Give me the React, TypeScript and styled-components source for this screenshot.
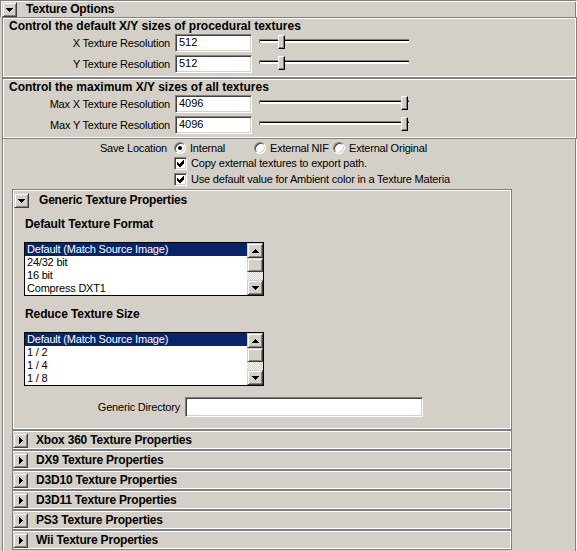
import React from "react";
import styled, { createGlobalStyle, css } from "styled-components";

const Global = createGlobalStyle`
  html, body { margin: 0; padding: 0; background: #d4d0c8; }
  body { font-family: "Liberation Sans", Arial, sans-serif; font-size: 11px; color: #000; }
`;

const sunken = css`
  box-sizing: border-box;
  border: 1px solid;
  border-color: #808080 #fff #fff #808080;
  box-shadow: inset 1px 1px #404040, inset -1px -1px #d4d0c8;
  background: #fff;
`;

const raised = css`
  box-sizing: border-box;
  border: 1px solid;
  border-color: #d4d0c8 #404040 #404040 #d4d0c8;
  box-shadow: inset 1px 1px #fff, inset -1px -1px #808080;
  background: #d4d0c8;
`;

const etched = css`
  box-sizing: border-box;
  border: 1px solid #808080;
  box-shadow: inset 0 0 0 1px #fff;
`;

const Page = styled.div`
  width: 577px;
  height: 551px;
  overflow: hidden;
  background: #d4d0c8;
  display: flex;
  flex-direction: column;
`;

const TopHeader = styled.div`
  box-sizing: border-box;
  flex: none;
  height: 17px;
  width: 577px;
  border-top: 1px solid #808080;
  border-left: 1px solid #808080;
  border-right: 1px solid #fff;
  box-shadow: inset 1px 1px #fff, inset -1px 0 #808080;
  padding: 1px 0 0 1px;
  display: flex;
  align-items: flex-start;
`;

const ToggleButton = styled.div`
  ${raised};
  flex: none;
  width: 15px;
  height: 15px;
  display: flex;
  align-items: center;
  justify-content: center;
`;

const HeaderTitle = styled.div<{ $indent: number }>`
  margin-left: ${(p) => p.$indent}px;
  font-weight: bold;
  font-size: 12px;
  line-height: 15px;
  letter-spacing: -0.2px;
  white-space: nowrap;
`;

const GroupBox = styled.div`
  ${etched};
  flex: none;
  margin-left: 2px;
  width: 575px;
  height: 61px;
  padding-top: 1px;
`;

const GroupTitle = styled.div`
  padding-left: 6px;
  font-weight: bold;
  font-size: 12px;
  line-height: 15px;
  white-space: nowrap;
`;

const Rows = styled.div`
  display: flex;
  flex-direction: column;
  gap: 3px;
`;

const FieldRow = styled.div`
  display: flex;
  align-items: center;
  height: 18px;
`;

const FieldLabel = styled.div<{ $w: number }>`
  flex: none;
  width: ${(p) => p.$w}px;
  margin-right: 5px;
  text-align: right;
  white-space: nowrap;
  letter-spacing: -0.2px;
`;

const TextField = styled.div<{ $w: number; $h: number }>`
  ${sunken};
  flex: none;
  width: ${(p) => p.$w}px;
  height: ${(p) => p.$h}px;
  padding-left: 3px;
  line-height: ${(p) => p.$h - 3}px;
  white-space: nowrap;
`;

const SliderBox = styled.div`
  position: relative;
  flex: none;
  width: 150px;
  height: 18px;
  margin-left: 7px;
`;

const Track = styled.div`
  box-sizing: border-box;
  margin-top: 5px;
  height: 4px;
  border-top: 1px solid #808080;
  border-left: 1px solid #808080;
  background: linear-gradient(#000 0 1px, #fff 1px 100%);
`;

const Thumb = styled.div`
  position: absolute;
  top: 1px;
  width: 7px;
  height: 14px;
  box-sizing: border-box;
  border: 1px solid;
  border-color: #fff #000 #000 #fff;
  box-shadow: inset -1px -1px #808080;
  background: #d4d0c8;
`;

const ContentFrame = styled.div`
  box-sizing: border-box;
  flex: 1;
  margin-left: 2px;
  width: 575px;
  border-left: 1px solid #808080;
  border-right: 1px solid #fff;
  box-shadow: inset 1px 0 #fff, inset -1px 0 #808080;
  padding-top: 1px;
`;

const SaveRow = styled.div`
  display: flex;
  align-items: center;
  height: 15px;
`;

const SaveLabel = styled.div`
  flex: none;
  width: 164px;
  margin-right: 7px;
  text-align: right;
  letter-spacing: -0.2px;
  white-space: nowrap;
`;

const RadioOption = styled.div<{ $w?: number }>`
  flex: none;
  display: flex;
  align-items: center;
  gap: 4px;
  width: ${(p) => (p.$w ? `${p.$w}px` : "auto")};
  letter-spacing: -0.2px;
  white-space: nowrap;
`;

const RadioCircle = styled.div`
  box-sizing: border-box;
  flex: none;
  width: 12px;
  height: 12px;
  border-radius: 50%;
  border: 1px solid;
  border-color: #808080 #fff #fff #808080;
  box-shadow: inset 1px 1px #404040, inset -1px -1px #d4d0c8;
  background: #fff;
  display: flex;
  align-items: center;
  justify-content: center;
`;

const RadioDot = styled.div`
  width: 4px;
  height: 4px;
  border-radius: 50%;
  background: #000;
`;

const CheckRow = styled.div`
  display: flex;
  align-items: center;
  height: 16px;
  padding-left: 171px;
`;

const CheckBox = styled.div`
  ${sunken};
  flex: none;
  width: 13px;
  height: 13px;
  display: flex;
  align-items: center;
  justify-content: center;
`;

const CheckText = styled.div`
  margin-left: 4px;
  white-space: nowrap;
  letter-spacing: -0.2px;
`;

const SubFrame = styled.div`
  ${etched};
  margin: 2px 0 0 9px;
  width: 500px;
  height: 241px;
`;

const SubHeader = styled.div`
  display: flex;
  align-items: center;
  height: 19px;
  padding-left: 1px;
  margin-top: 1px;
`;

const SectionLabel = styled.div<{ $top: number }>`
  margin: ${(p) => p.$top}px 0 0 12px;
  font-weight: bold;
  font-size: 12px;
  line-height: 14px;
  letter-spacing: -0.1px;
  white-space: nowrap;
`;

const ListBox = styled.div`
  box-sizing: border-box;
  margin: 11px 0 0 11px;
  width: 240px;
  height: 54px;
  border: 1px solid #000;
  background: #fff;
  display: flex;
`;

const ListItems = styled.div`
  flex: 1;
  overflow: hidden;
`;

const ListItem = styled.div<{ $selected?: boolean }>`
  height: 13px;
  line-height: 13px;
  padding-left: 2px;
  white-space: nowrap;
  letter-spacing: -0.2px;
  background: ${(p) => (p.$selected ? "#0a246a" : "transparent")};
  color: ${(p) => (p.$selected ? "#fff" : "#000")};
`;

const ScrollBar = styled.div`
  flex: none;
  width: 16px;
  display: flex;
  flex-direction: column;
`;

const ScrollButton = styled.div`
  ${raised};
  height: 15px;
  display: flex;
  align-items: center;
  justify-content: center;
`;

const ScrollThumb = styled.div`
  ${raised};
  height: 14px;
`;

const ScrollTrack = styled.div`
  flex: 1;
  background: repeating-conic-gradient(#fff 0 25%, #d4d0c8 0 50%) 0 0 / 2px 2px;
`;

const DirRow = styled.div`
  display: flex;
  align-items: center;
  height: 20px;
  margin-top: 11px;
`;

const CollapsedHeader = styled.div`
  ${etched};
  flex: none;
  margin-left: 9px;
  width: 500px;
  height: 20px;
  display: flex;
  align-items: center;
  padding-left: 0px;
`;

const Pixels: React.FC<{ w: number; h: number; rects: number[][] }> = ({ w, h, rects }) => (
  <svg width={w} height={h} viewBox={`0 0 ${w} ${h}`} shapeRendering="crispEdges">
    {rects.map(([x, y, rw, rh], i) => (
      <rect key={i} x={x} y={y} width={rw} height={rh} fill="#000" />
    ))}
  </svg>
);

const DownArrow = () => <Pixels w={7} h={4} rects={[[0, 0, 7, 1], [1, 1, 5, 1], [2, 2, 3, 1], [3, 3, 1, 1]]} />;
const UpArrow = () => <Pixels w={7} h={4} rects={[[3, 0, 1, 1], [2, 1, 3, 1], [1, 2, 5, 1], [0, 3, 7, 1]]} />;
const RightArrow = () => <Pixels w={4} h={7} rects={[[0, 0, 1, 7], [1, 1, 1, 5], [2, 2, 1, 3], [3, 3, 1, 1]]} />;

const CheckMark = () => (
  <svg width={7} height={7} viewBox="0 0 7 7" shapeRendering="crispEdges">
    <path d="M0 2 L2 4 L6 0 L7 0 L7 3 L3 7 L2 7 L0 5 Z" fill="#000" />
  </svg>
);

const Slider: React.FC<{ value: number; max: number }> = ({ value, max }) => (
  <SliderBox>
    <Track />
    <Thumb style={{ left: Math.round(1 + (value / max) * 141) }} />
  </SliderBox>
);

const Field: React.FC<{ label: string; value: string }> = ({ label, value }) => (
  <FieldRow>
    <FieldLabel $w={167}>{label}</FieldLabel>
    <TextField $w={77} $h={18}>{value}</TextField>
    <Slider value={Number(value)} max={4096} />
  </FieldRow>
);

const List: React.FC<{ items: string[] }> = ({ items }) => (
  <ListBox>
    <ListItems>
      {items.map((it, i) => (
        <ListItem key={it} $selected={i === 0}>
          {it}
        </ListItem>
      ))}
    </ListItems>
    <ScrollBar>
      <ScrollButton>
        <UpArrow />
      </ScrollButton>
      <ScrollThumb />
      <ScrollTrack />
      <ScrollButton>
        <DownArrow />
      </ScrollButton>
    </ScrollBar>
  </ListBox>
);

const collapsed = [
  "Xbox 360 Texture Properties",
  "DX9 Texture Properties",
  "D3D10 Texture Properties",
  "D3D11 Texture Properties",
  "PS3 Texture Properties",
  "Wii Texture Properties",
];

export default function App() {
  return (
    <Page>
      <Global />
      <TopHeader>
        <ToggleButton>
          <DownArrow />
        </ToggleButton>
        <HeaderTitle $indent={9}>Texture Options</HeaderTitle>
      </TopHeader>

      <GroupBox>
        <GroupTitle>Control the default X/Y sizes of procedural textures</GroupTitle>
        <Rows>
          <Field label="X Texture Resolution" value="512" />
          <Field label="Y Texture Resolution" value="512" />
        </Rows>
      </GroupBox>

      <GroupBox>
        <GroupTitle>Control the maximum X/Y sizes of all textures</GroupTitle>
        <Rows>
          <Field label="Max X Texture Resolution" value="4096" />
          <Field label="Max Y Texture Resolution" value="4096" />
        </Rows>
      </GroupBox>

      <ContentFrame>
        <SaveRow>
          <SaveLabel>Save Location</SaveLabel>
          <RadioOption $w={80}>
            <RadioCircle>
              <RadioDot />
            </RadioCircle>
            Internal
          </RadioOption>
          <RadioOption $w={79}>
            <RadioCircle />
            External NIF
          </RadioOption>
          <RadioOption>
            <RadioCircle />
            External Original
          </RadioOption>
        </SaveRow>
        <CheckRow>
          <CheckBox>
            <CheckMark />
          </CheckBox>
          <CheckText>Copy external textures to export path.</CheckText>
        </CheckRow>
        <CheckRow>
          <CheckBox>
            <CheckMark />
          </CheckBox>
          <CheckText>Use default value for Ambient color in a Texture Materia</CheckText>
        </CheckRow>

        <SubFrame>
          <SubHeader>
            <ToggleButton>
              <DownArrow />
            </ToggleButton>
            <HeaderTitle $indent={10}>Generic Texture Properties</HeaderTitle>
          </SubHeader>
          <SectionLabel $top={7}>Default Texture Format</SectionLabel>
          <List items={["Default (Match Source Image)", "24/32 bit", "16 bit", "Compress DXT1"]} />
          <SectionLabel $top={11}>Reduce Texture Size</SectionLabel>
          <List items={["Default (Match Source Image)", "1 / 2", "1 / 4", "1 / 8"]} />
          <DirRow>
            <FieldLabel $w={167}>Generic Directory</FieldLabel>
            <TextField $w={238} $h={20} />
          </DirRow>
        </SubFrame>

        {collapsed.map((t) => (
          <CollapsedHeader key={t}>
            <ToggleButton>
              <RightArrow />
            </ToggleButton>
            <HeaderTitle $indent={8}>{t}</HeaderTitle>
          </CollapsedHeader>
        ))}
      </ContentFrame>
    </Page>
  );
}
